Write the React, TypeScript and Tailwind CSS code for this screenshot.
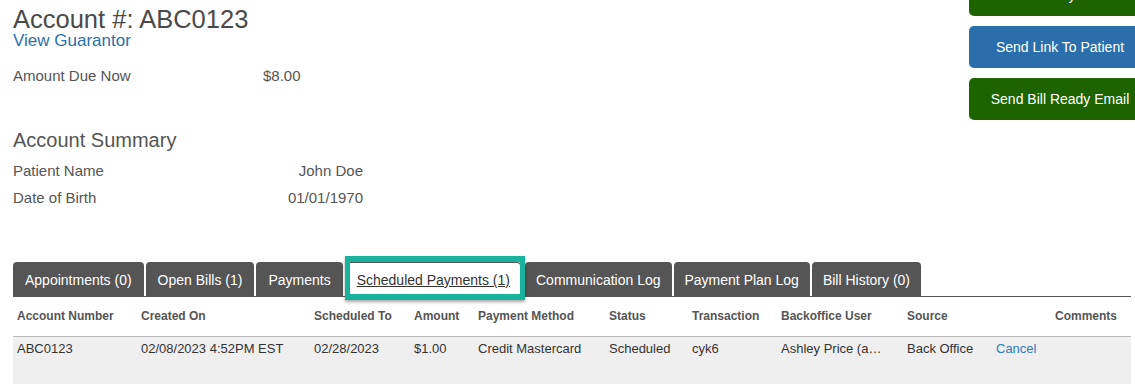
import React from 'react';

const tabs = ['Appointments (0)', 'Open Bills (1)', 'Payments'];
const tabsAfter = ['Communication Log', 'Payment Plan Log', 'Bill History (0)'];

export default function App() {
  return (
    <div className="w-[1135px] h-[384px] overflow-hidden bg-white pl-[13px] font-['Liberation_Sans',Arial,sans-serif] text-[#555]">
      <div className="flex">
        <div className="w-[956px] shrink-0 pt-[7px]">
          <h1 className="text-[25.5px] leading-[24px] text-[#4a4a4a]">Account #: ABC0123</h1>
          <a href="#" className="mt-[1px] block text-[17px] leading-[18px] text-[#2a6fad]">
            View Guarantor
          </a>
          <div className="mt-[17px] flex text-[15px] leading-[18px]">
            <span className="w-[250px]">Amount Due Now</span>
            <span>$8.00</span>
          </div>
          <h2 className="mt-[43px] text-[20px] leading-[24px]">Account Summary</h2>
          <div className="mt-[10px] flex w-[350px] justify-between text-[15px] leading-[18px]">
            <span>Patient Name</span>
            <span>John Doe</span>
          </div>
          <div className="mt-[9px] flex w-[350px] justify-between text-[15px] leading-[18px]">
            <span>Date of Birth</span>
            <span>01/01/1970</span>
          </div>
        </div>
        <div className="-mt-[26px] flex w-[182px] shrink-0 flex-col gap-[10px] text-[14px] text-white">
          <button className="h-[42px] rounded-[5px] bg-[#1d6401]">Make Payment</button>
          <button className="h-[42px] rounded-[5px] bg-[#2a6fab]">Send Link To Patient</button>
          <button className="h-[42px] rounded-[5px] bg-[#1d6401]">Send Bill Ready Email</button>
        </div>
      </div>

      <div className="mr-[4px] mt-[55px] flex items-end gap-[2px] border-b border-[#555] text-[14px]">
        {tabs.map((t) => (
          <div key={t} className="h-[34px] rounded-t-[4px] bg-[#555] px-[12px] leading-[36px] text-white">
            {t}
          </div>
        ))}
        <div className="relative ml-[1px] mr-[2px] h-[34px] rounded-t-[4px] border border-b-0 border-[#555] bg-white px-[10px] leading-[34px] text-[#333]">
          <span className="underline">Scheduled Payments (1)</span>
          <div className="absolute -top-[7px] -bottom-[4px] -left-[2px] -right-[5px] border-x-[5px] border-y-[6px] border-[#19b29c] shadow-[0_2px_3px_rgba(0,0,0,0.35)]" />
        </div>
        {tabsAfter.map((t) => (
          <div key={t} className="h-[34px] rounded-t-[4px] bg-[#555] px-[11px] leading-[36px] text-white">
            {t}
          </div>
        ))}
      </div>

      <table className="w-[1118px] table-fixed border-collapse">
        <colgroup>
          <col className="w-[124px]" />
          <col className="w-[173px]" />
          <col className="w-[100px]" />
          <col className="w-[64px]" />
          <col className="w-[131px]" />
          <col className="w-[83px]" />
          <col className="w-[89px]" />
          <col className="w-[126px]" />
          <col className="w-[89px]" />
          <col className="w-[59px]" />
          <col className="w-[80px]" />
        </colgroup>
        <thead>
          <tr className="h-[39px] text-left text-[12px] font-bold text-[#555]">
            <th className="pl-[4px]">Account Number</th>
            <th className="pl-[4px]">Created On</th>
            <th className="pl-[4px]">Scheduled To</th>
            <th className="pl-[4px]">Amount</th>
            <th className="pl-[4px]">Payment Method</th>
            <th className="pl-[4px]">Status</th>
            <th className="pl-[4px]">Transaction</th>
            <th className="pl-[4px]">Backoffice User</th>
            <th className="pl-[4px]">Source</th>
            <th className="pl-[4px]"></th>
            <th className="pl-[4px]">Comments</th>
          </tr>
        </thead>
        <tbody>
          <tr className="h-[60px] border-t border-[#bbb] bg-[#efefef] align-top text-[13px] leading-[16px] text-[#333]">
            <td className="pl-[4px] pt-[4px]">ABC0123</td>
            <td className="pl-[4px] pt-[4px]">02/08/2023 4:52PM EST</td>
            <td className="pl-[4px] pt-[4px]">02/28/2023</td>
            <td className="pl-[4px] pt-[4px]">$1.00</td>
            <td className="pl-[4px] pt-[4px]">Credit Mastercard</td>
            <td className="pl-[4px] pt-[4px]">Scheduled</td>
            <td className="pl-[4px] pt-[4px]">cyk6</td>
            <td className="pl-[4px] pt-[4px]">
              <span className="block w-[104px] truncate">Ashley Price (admin)</span>
            </td>
            <td className="pl-[4px] pt-[4px]">Back Office</td>
            <td className="pl-[4px] pt-[4px]">
              <a href="#" className="text-[#2a7bc0]">Cancel</a>
            </td>
            <td className="pl-[4px] pt-[4px]"></td>
          </tr>
        </tbody>
      </table>
    </div>
  );
}
